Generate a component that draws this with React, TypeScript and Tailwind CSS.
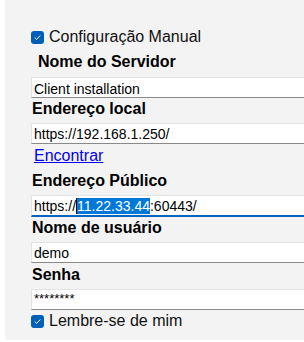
import type { ReactNode } from 'react';

function CheckBox() {
  return (
    <span className="flex h-[13px] w-[13px] shrink-0 items-center justify-center rounded-[3px] bg-[#005fb8]">
      <svg width="9" height="9" viewBox="0 0 9 9" fill="none">
        <path d="M2 4.8 L3.7 6.4 L7 2.8" stroke="white" strokeWidth="1" strokeLinecap="round" strokeLinejoin="round" />
      </svg>
    </span>
  );
}

function Field({ children, focused, className = '' }: { children: ReactNode; focused?: boolean; className?: string }) {
  return (
    <div
      className={`flex w-[300px] items-start bg-white pl-[2px] text-[14px] text-black border-l border-t border-[#e3e3e3] ${
        focused ? 'h-[22px] border-b-2 border-b-[#0067c0]' : 'h-[21px] border-b border-b-[#8a8a8a]'
      } ${className}`}
    >
      {children}
    </div>
  );
}

function Label({ children, className = '' }: { children: ReactNode; className?: string }) {
  return <div className={`text-[16px] font-bold leading-[18px] text-black ${className}`}>{children}</div>;
}

export default function App() {
  return (
    <div className="h-[342px] w-[304px] overflow-hidden bg-white" style={{ fontFamily: '"Liberation Sans", Arial, sans-serif' }}>
      <div className="ml-[5px] flex h-[340px] w-[320px] flex-col bg-[#f3f3f3] pl-[26px] pt-[28px]">
        <div className="flex h-[18px] items-center gap-[5px] text-[16px] leading-[18px] text-[#111]">
          <CheckBox />
          <span className="-mt-[1px]">Configuração Manual</span>
        </div>

        <Label className="ml-[7px] mt-[7px]">Nome do Servidor</Label>
        <Field className="mt-[6px]">
          <span className="leading-[21px] pt-[1px]">Client installation</span>
        </Field>

        <Label className="ml-[1px] mt-[2px]">Endereço local</Label>
        <Field className="mt-[5px]">
          <span className="leading-[21px]">https://192.168.1.250/</span>
        </Field>

        <a href="#" className="ml-[3px] mt-[3px] w-fit text-[16px] leading-[18px] text-[#0000ee] underline">
          Encontrar
        </a>

        <Label className="ml-[1px] mt-[7px]">Endereço Público</Label>
        <Field focused className="mt-[5px]">
          <span className="flex leading-[21px]">
            https://
            <span className="mt-[2px] flex h-[16px] items-center border-l border-black bg-[#0078d7] leading-[16px] text-white">11.22.33.44</span>
            :60443/
          </span>
        </Field>

        <Label className="ml-[1px] mt-[2px]">Nome de usuário</Label>
        <Field className="mt-[5px]">
          <span className="leading-[21px]">demo</span>
        </Field>

        <Label className="ml-[1px] mt-[3px]">Senha</Label>
        <Field className="mt-[5px]">
          <span className="text-[13px] leading-[18px]">********</span>
        </Field>

        <div className="mt-[2px] flex h-[18px] items-center gap-[5px] text-[16px] leading-[18px] text-[#111]">
          <CheckBox />
          <span>Lembre-se de mim</span>
        </div>
      </div>
    </div>
  );
}
